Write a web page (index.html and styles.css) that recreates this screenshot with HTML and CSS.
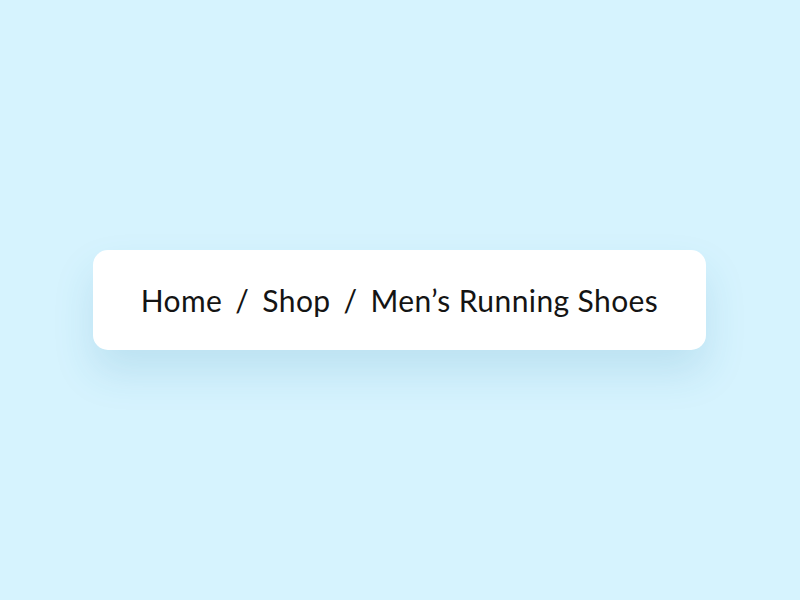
FILE: index.html
```html
<!DOCTYPE html>
<html lang="en">
<head>
<meta charset="utf-8">
<title>Breadcrumb</title>
<link rel="stylesheet" href="styles.css">
</head>
<body>
<main class="stage">
  <nav class="card" aria-label="Breadcrumb">
    <ol class="crumbs">
      <li class="crumb"><a href="#">Home</a></li>
      <li class="sep" aria-hidden="true">/</li>
      <li class="crumb"><a href="#">Shop</a></li>
      <li class="sep" aria-hidden="true">/</li>
      <li class="crumb current" aria-current="page">Men’s Running Shoes</li>
    </ol>
  </nav>
</main>
</body>
</html>
```
FILE: styles.css
```css
html, body {
  margin: 0;
  height: 100%;
}
body {
  background: #d6f3fe;
  font-family: "Lato", "Noto Sans", sans-serif;
}
.stage {
  height: 100%;
  display: flex;
  align-items: center;
  justify-content: center;
}
.card {
  width: 613px;
  height: 100px;
  margin-right: 1px;
  box-sizing: border-box;
  background: #ffffff;
  border-radius: 15px;
  display: flex;
  align-items: center;
  justify-content: center;
  box-shadow: 0 22px 40px rgba(40, 130, 170, 0.15);
}
.crumbs {
  list-style: none;
  margin: 0;
  padding: 0 0 1px;
  display: flex;
  align-items: baseline;
  gap: 13px;
  font-size: 30px;
  letter-spacing: 0.4px;
  color: #141414;
}
.crumb a {
  color: inherit;
  text-decoration: none;
}
```
